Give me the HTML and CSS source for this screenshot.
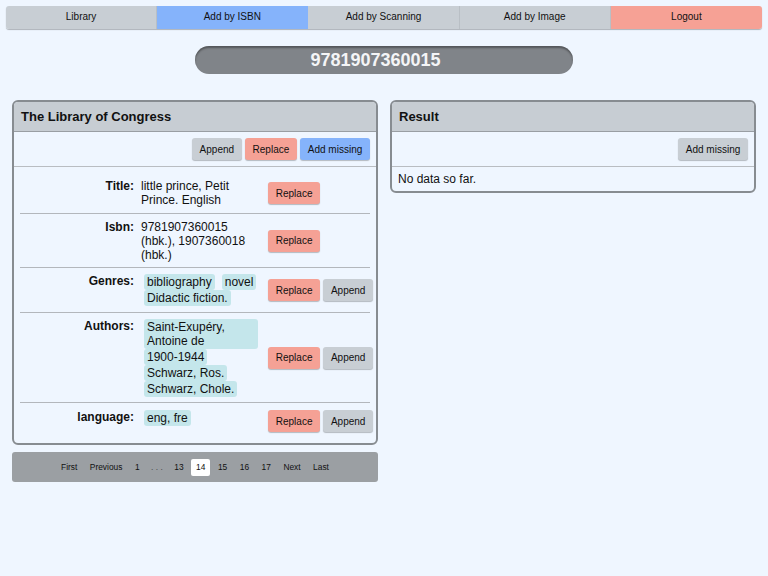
FILE: index.html
```html
<!DOCTYPE html>
<html lang="en">
<head>
<meta charset="utf-8">
<title>Add by ISBN</title>
<link rel="stylesheet" href="styles.css">
</head>
<body>
<nav class="tabs">
  <a class="tab">Library</a>
  <a class="tab tab-blue">Add by ISBN</a>
  <a class="tab">Add by Scanning</a>
  <a class="tab">Add by Image</a>
  <a class="tab tab-red">Logout</a>
</nav>

<div class="isbn-wrap">
  <div class="isbn-pill">9781907360015</div>
</div>

<main class="columns">
  <div class="col">
    <section class="card">
      <header class="card-head">The Library of Congress</header>
      <div class="card-tools">
        <button class="btn btn-gray">Append</button>
        <button class="btn btn-red">Replace</button>
        <button class="btn btn-blue">Add missing</button>
      </div>
      <div class="rows">
        <div class="row">
          <div class="label">Title:</div>
          <div class="value">little prince, Petit Prince. English</div>
          <div class="actions"><button class="btn btn-red">Replace</button></div>
        </div>
        <div class="row">
          <div class="label">Isbn:</div>
          <div class="value">9781907360015 (hbk.), 1907360018 (hbk.)</div>
          <div class="actions"><button class="btn btn-red">Replace</button></div>
        </div>
        <div class="row">
          <div class="label">Genres:</div>
          <div class="value tags">
            <span class="tag">bibliography</span>
            <span class="tag">novel</span>
            <span class="tag">Didactic fiction.</span>
          </div>
          <div class="actions"><button class="btn btn-red">Replace</button><button class="btn btn-gray">Append</button></div>
        </div>
        <div class="row">
          <div class="label">Authors:</div>
          <div class="value tags">
            <span class="tag">Saint-Exupéry, Antoine de</span>
            <span class="tag">1900-1944</span>
            <span class="tag">Schwarz, Ros.</span>
            <span class="tag">Schwarz, Chole.</span>
          </div>
          <div class="actions"><button class="btn btn-red">Replace</button><button class="btn btn-gray">Append</button></div>
        </div>
        <div class="row">
          <div class="label">language:</div>
          <div class="value tags">
            <span class="tag">eng, fre</span>
          </div>
          <div class="actions"><button class="btn btn-red">Replace</button><button class="btn btn-gray">Append</button></div>
        </div>
      </div>
    </section>

    <nav class="pager">
      <a class="page">First</a>
      <a class="page">Previous</a>
      <a class="page">1</a>
      <span class="page dots">. . .</span>
      <a class="page">13</a>
      <a class="page current">14</a>
      <a class="page">15</a>
      <a class="page">16</a>
      <a class="page">17</a>
      <a class="page">Next</a>
      <a class="page">Last</a>
    </nav>
  </div>

  <div class="col">
    <section class="card">
      <header class="card-head">Result</header>
      <div class="card-tools">
        <button class="btn btn-gray">Add missing</button>
      </div>
      <div class="card-body">No data so far.</div>
    </section>
  </div>
</main>
</body>
</html>
```

FILE: styles.css
```css
* { box-sizing: border-box; }

html, body {
  background: #eff6ff;
}

body {
  margin: 0;
  padding: 6px;
  font-family: "Liberation Sans", Arial, sans-serif;
  color: #111;
  font-size: 12px;
}

/* top tabs */
.tabs {
  display: grid;
  grid-template-columns: repeat(5, 1fr);
  height: 23px;
  border-radius: 3px;
  overflow: hidden;
  box-shadow: 0 1px 1px rgba(0, 0, 0, 0.28);
}

.tab {
  display: flex;
  align-items: center;
  justify-content: center;
  background: #c8ced4;
  font-size: 10px;
  color: #111;
  border-right: 1px solid #b9bfc5;
  padding-bottom: 2px;
}

.tab:last-child { border-right: none; }
.tab-blue { background: #85b3fb; border-right-color: #85b3fb; }
.tab-red { background: #f6a195; }

/* isbn pill */
.isbn-wrap {
  display: flex;
  justify-content: center;
  margin-top: 17px;
}

.isbn-pill {
  width: 378px;
  height: 28px;
  border-radius: 14px;
  background: #808489;
  box-shadow: inset 0 2px 2px rgba(0, 0, 0, 0.35);
  color: #f4f5f7;
  font-weight: bold;
  font-size: 18px;
  display: flex;
  align-items: center;
  justify-content: center;
  padding: 1px 17px 0 0;
}

/* columns */
.columns {
  display: grid;
  grid-template-columns: minmax(0, 1fr) minmax(0, 1fr);
  column-gap: 12px;
  padding: 0 6px;
  margin-top: 26px;
  align-items: start;
}

.col {
  display: flex;
  flex-direction: column;
  gap: 7px;
  min-width: 0;
}

/* cards */
.card {
  border: 2px solid #878c91;
  border-radius: 6px;
  overflow: hidden;
  background: #eff6ff;
}

.card-head {
  background: #c7cdd3;
  font-weight: bold;
  font-size: 13px;
  line-height: 16px;
  padding: 7px 7px 6px;
  border-bottom: 1px solid #999ea3;
}

.card-tools {
  display: flex;
  justify-content: flex-end;
  gap: 3px;
  padding: 6px 6px 6px;
  border-bottom: 1px solid #b9bdc2;
}

.card-body {
  padding: 5px 6px 5px;
  line-height: 14px;
}

/* buttons */
.btn {
  font-family: "Liberation Sans", Arial, sans-serif;
  font-size: 10px;
  color: #111;
  height: 22px;
  padding: 0 7.75px;
  border: none;
  border-radius: 3px;
  box-shadow: 0 1px 1px rgba(0, 0, 0, 0.25);
  display: inline-flex;
  align-items: center;
  justify-content: center;
  white-space: nowrap;
  flex: none;
}

.btn-gray { background: #c8ced4; }
.btn-red { background: #f5a195; }
.btn-blue { background: #85b3fb; }

/* rows */
.rows {
  padding: 6px 6px 5.5px;
}

.row {
  display: grid;
  grid-template-columns: 114px 120px auto;
  column-gap: 7px;
  padding: 6px 0 5.5px;
  border-bottom: 1px solid #b3b7bc;
  line-height: 14px;
  min-width: 0;
}

.row:last-child {
  border-bottom: none;
  padding-top: 7px;
}

.label {
  text-align: right;
  font-weight: bold;
}

.tags {
  display: flex;
  flex-wrap: wrap;
  column-gap: 7px;
  row-gap: 0;
  padding: 0 3px;
  align-content: flex-start;
}

.tag {
  background: #c4e6eb;
  border-radius: 3px;
  padding: 1px 3px;
  line-height: 14px;
}

.actions {
  display: flex;
  gap: 3px;
  align-self: center;
}

/* pager */
.pager {
  height: 30px;
  background: #9b9fa3;
  border-radius: 3px;
  display: flex;
  align-items: center;
  justify-content: center;
  gap: 2.5px;
}

.page {
  font-size: 8.4px;
  line-height: 17px;
  height: 17px;
  padding: 0 5px;
  color: #111;
  border-radius: 2px;
}

.page.dots { color: #4a4d50; padding: 0 4px; }

.page.current {
  background: #ffffff;
}
```
